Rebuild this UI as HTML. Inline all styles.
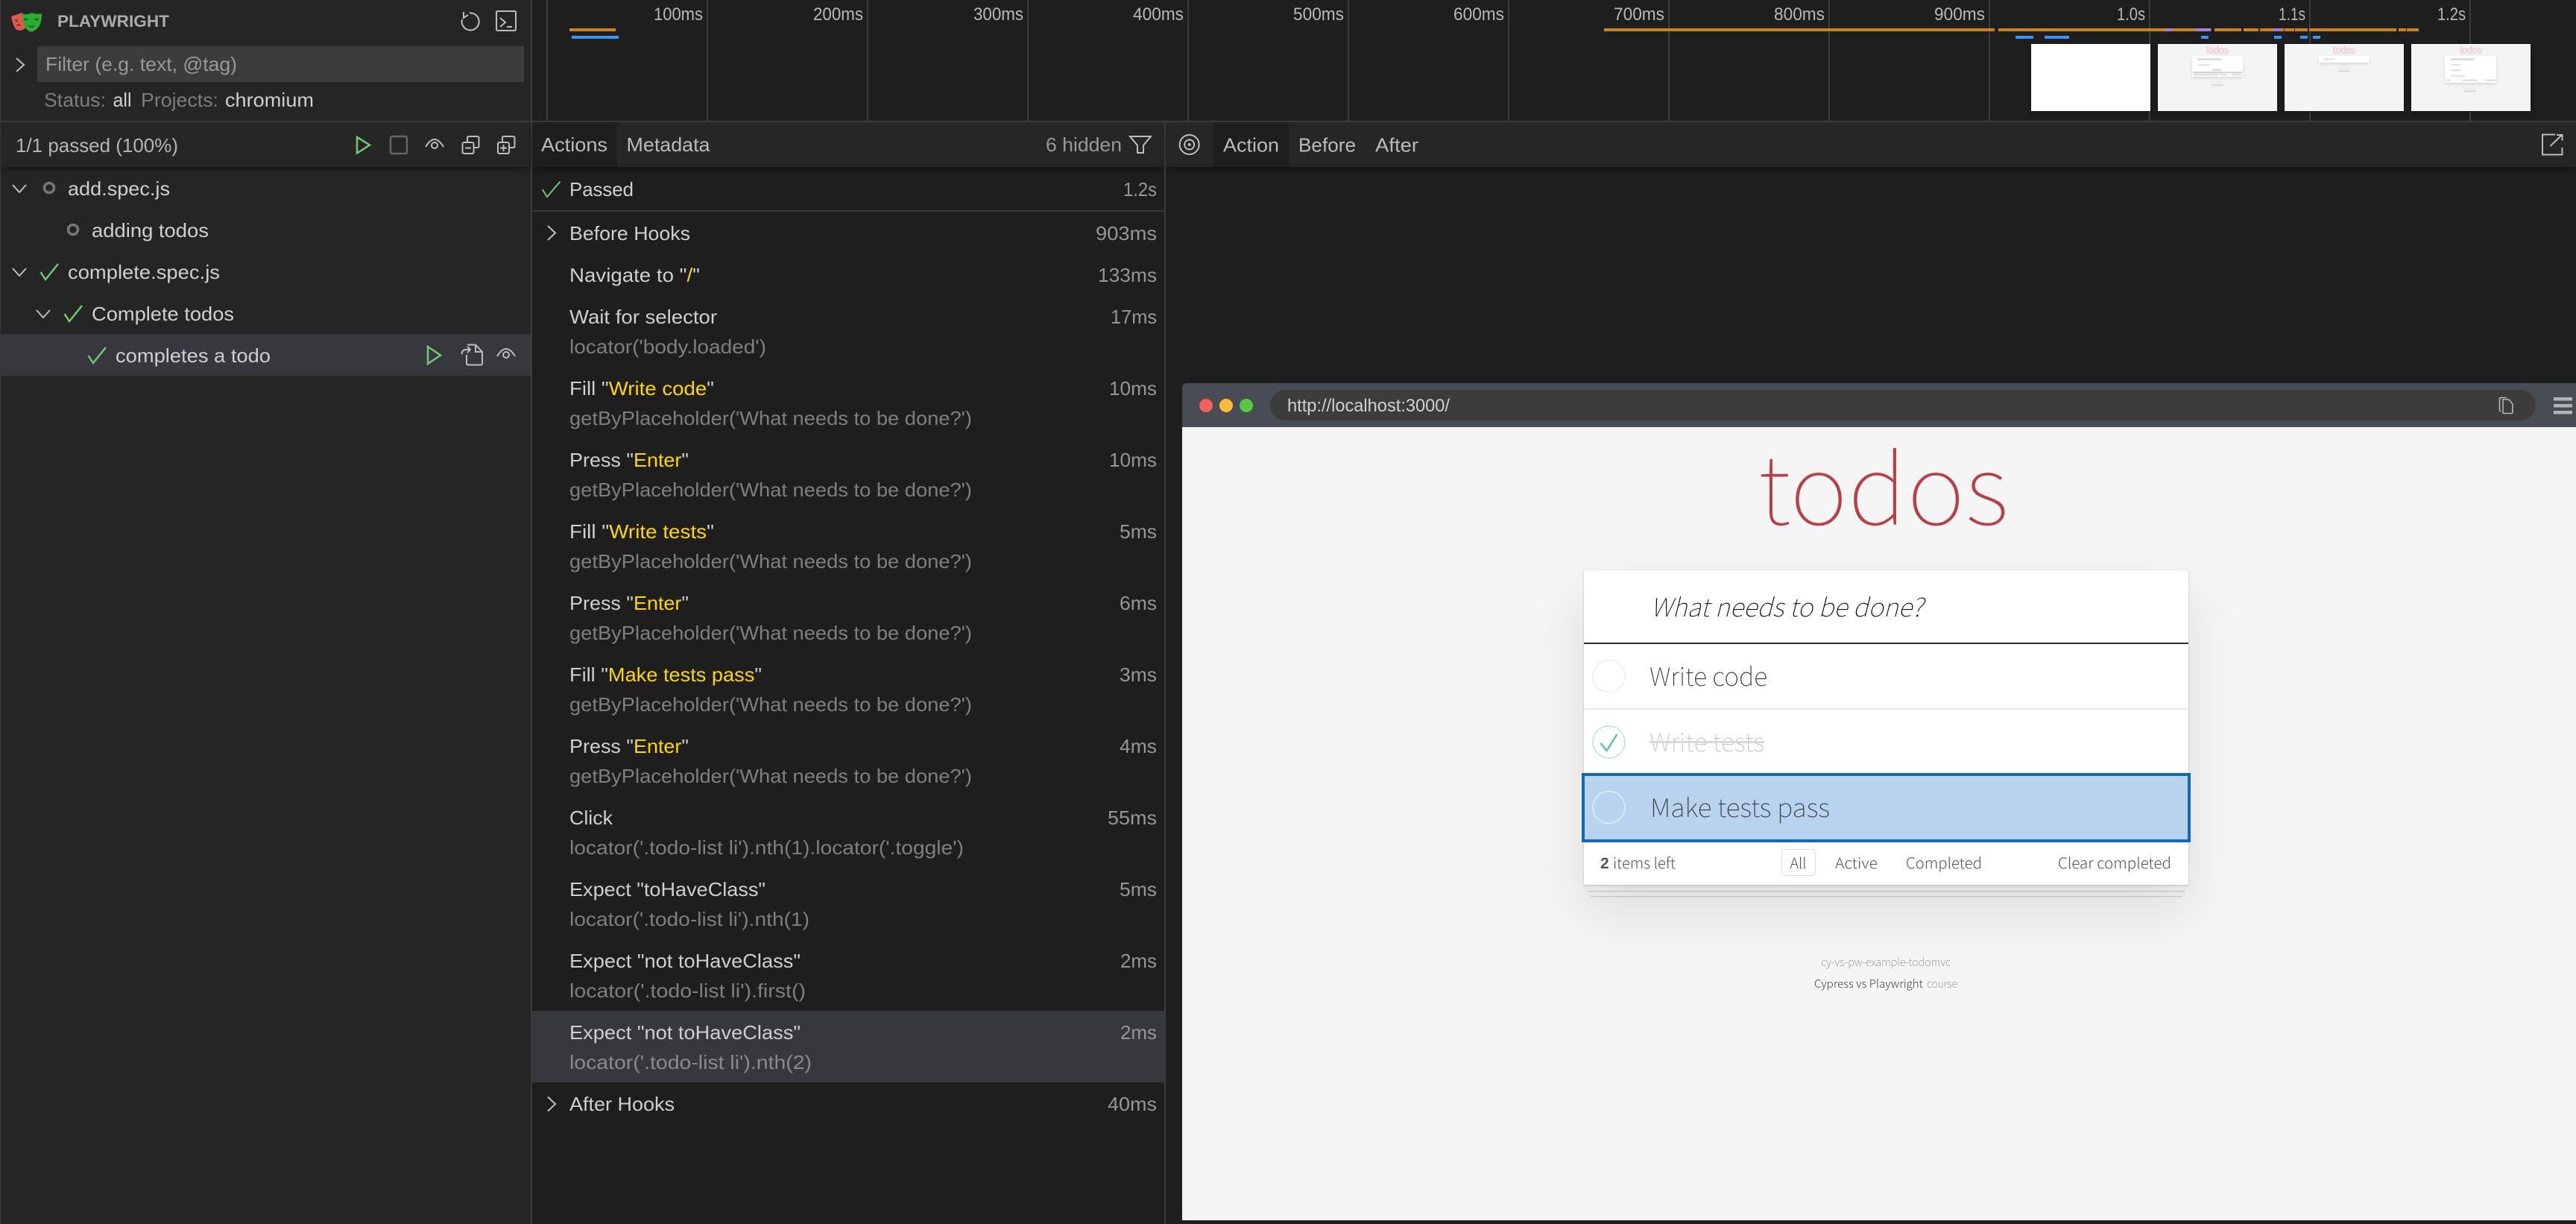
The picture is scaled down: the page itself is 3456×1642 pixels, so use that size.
<!DOCTYPE html>
<html><head><meta charset="utf-8"><title>Playwright</title>
<style>
html,body{margin:0;padding:0;background:#1e1e1e}
body{width:3456px;height:1642px;position:relative;overflow:hidden;font-family:"Liberation Sans",sans-serif}
.b{position:absolute}
svg{position:absolute;left:0;top:0}
text{font-family:"Liberation Sans",sans-serif;font-size:26px;white-space:pre}
.t{fill:#cfcfcf}.s{fill:#7f7f7f}.d{fill:#969696}.y{fill:#ffd700}
.l{fill:#b8b8b8;font-size:24px}
.i{fill:none;stroke:#bdbdbd;stroke-width:2}
.g{fill:none;stroke:#73c971;stroke-width:2.5}
.lt{font-family:"Noto Sans CJK JP","Liberation Sans",sans-serif;font-weight:300;font-size:20px;fill:#555}
.th{font-family:"Noto Sans CJK JP","Liberation Sans",sans-serif;font-weight:100}
.td{font-size:34px;fill:#3a3a3a}
</style></head><body>

<!-- panels -->
<div class="b" style="left:0;top:0;width:712px;height:1642px;background:#252526"></div>
<div class="b" style="left:0;top:0;width:1px;height:1642px;background:#3a3a3a"></div>
<div class="b" style="left:50px;top:62px;width:653px;height:48px;background:#3c3c3c"></div>
<div class="b" style="left:0;top:448px;width:712px;height:56px;background:#37383d"></div>
<div class="b" style="left:712px;top:0;width:2px;height:1642px;background:#3c3c3c"></div>
<div class="b" style="left:1562px;top:164px;width:2px;height:1478px;background:#3c3c3c"></div>
<div class="b" style="left:714px;top:1356px;width:848px;height:96px;background:#37383d"></div>
<div class="b" style="left:714px;top:282px;width:848px;height:2px;background:#3c3c3c"></div>

<!-- toolbars -->
<div class="b" style="left:1px;top:164px;width:711px;height:60px;background:#262626;box-shadow:0 5px 8px -4px rgba(0,0,0,.6)"></div>
<div class="b" style="left:714px;top:164px;width:848px;height:60px;background:#262626;box-shadow:0 5px 8px -4px rgba(0,0,0,.6)"></div>
<div class="b" style="left:714px;top:164px;width:114px;height:60px;background:#1e1e1e"></div>
<div class="b" style="left:1564px;top:164px;width:1892px;height:60px;background:#262626;box-shadow:0 5px 8px -4px rgba(0,0,0,.6)"></div>
<div class="b" style="left:1628px;top:164px;width:101px;height:60px;background:#1e1e1e"></div>

<!-- timeline grid -->
<svg width="3456" height="164" style="z-index:0">
<g fill="#3c3c3c">
<rect x="733" y="0" width="2" height="162"/><rect x="948" y="0" width="2" height="162"/><rect x="1163" y="0" width="2" height="162"/><rect x="1378" y="0" width="2" height="162"/><rect x="1593" y="0" width="2" height="162"/><rect x="1808" y="0" width="2" height="162"/><rect x="2023" y="0" width="2" height="162"/><rect x="2238" y="0" width="2" height="162"/><rect x="2453" y="0" width="2" height="162"/><rect x="2668" y="0" width="2" height="162"/><rect x="2883" y="0" width="2" height="162"/><rect x="3098" y="0" width="2" height="162"/><rect x="3313" y="0" width="2" height="162"/>
<rect x="712" y="162" width="2744" height="2"/><rect x="0" y="162" width="712" height="2"/>
</g>
<g fill="#ce8319">
<rect x="764" y="38" width="62" height="4"/>
<rect x="2152" y="38" width="524" height="4"/><rect x="2681" y="38" width="224" height="4"/><rect x="2914" y="38" width="32" height="4"/><rect x="2965.5" y="38" width="1" height="4"/><rect x="2971" y="38" width="36" height="4"/><rect x="3010" y="38" width="20" height="4"/><rect x="3032" y="38" width="18" height="4"/><rect x="3060" y="38" width="4" height="4"/><rect x="3065" y="38" width="13" height="4"/><rect x="3079" y="38" width="17" height="4"/><rect x="3098" y="38" width="117" height="4"/><rect x="3218" y="38" width="10" height="4"/><rect x="3229" y="38" width="16" height="4"/>
</g>
<g fill="#ac7fd6"><rect x="2905" y="38" width="9" height="4"/><rect x="2946" y="38" width="20" height="4"/><rect x="3050" y="38" width="10" height="4"/></g>
<g fill="#3794ff"><rect x="767" y="48" width="63" height="4"/><rect x="2704" y="48" width="24" height="4"/><rect x="2743" y="48" width="33" height="4"/><rect x="2953" y="48" width="10" height="4"/><rect x="3051" y="48" width="10" height="4"/><rect x="3086" y="48" width="10" height="4"/><rect x="3103" y="48" width="10" height="4"/></g>
</svg>

<!-- thumbnails -->
<div class="b" style="left:2725px;top:59px;width:160px;height:90px;background:#fff;box-shadow:0 2px 5px rgba(0,0,0,.35)"></div>
<div class="b" style="left:2895px;top:59px;width:160px;height:90px;background:#f4f4f4;box-shadow:0 2px 5px rgba(0,0,0,.35)"></div>
<div class="b" style="left:3065px;top:59px;width:160px;height:90px;background:#f4f4f4;box-shadow:0 2px 5px rgba(0,0,0,.35)"></div>
<div class="b" style="left:3235px;top:59px;width:160px;height:90px;background:#f4f4f4;box-shadow:0 2px 5px rgba(0,0,0,.35)"></div>
<div class="b" style="left:2941px;top:75px;width:68px;height:28px;background:#fff;box-shadow:0 2px 4px rgba(0,0,0,.12)"></div>
<div class="b" style="left:3111px;top:75px;width:68px;height:9px;background:#fff;box-shadow:0 2px 4px rgba(0,0,0,.12)"></div>
<div class="b" style="left:3280px;top:75px;width:69px;height:36px;background:#fff;box-shadow:0 2px 4px rgba(0,0,0,.12)"></div>

<!-- browser chrome -->
<div class="b" style="left:1586px;top:514px;width:1870px;height:59px;background:#474c55;border-radius:6px 0 0 0"></div>
<div class="b" style="left:1704px;top:523px;width:1698px;height:41px;background:#3c3c3c;border-radius:20px"></div>
<div class="b" style="left:1609px;top:535px;width:18px;height:18px;border-radius:50%;background:#f66058"></div>
<div class="b" style="left:1636px;top:535px;width:18px;height:18px;border-radius:50%;background:#fdbb3a"></div>
<div class="b" style="left:1663px;top:535px;width:18px;height:18px;border-radius:50%;background:#56c93f"></div>
<div class="b" style="left:1586px;top:573px;width:1870px;height:1064px;background:#f5f5f5"></div>

<!-- todo card -->
<div class="b" style="left:2134px;top:1180px;width:793px;height:22px;background:#f6f6f6;box-shadow:0 1px 1px rgba(0,0,0,.2)"></div>
<div class="b" style="left:2129px;top:1180px;width:802px;height:15px;background:#f6f6f6;box-shadow:0 1px 1px rgba(0,0,0,.2)"></div>
<div class="b" style="left:2125px;top:765px;width:811px;height:422px;background:#fff;box-shadow:0 1px 3px rgba(0,0,0,.2),0 34px 68px rgba(0,0,0,.1)"></div>
<div class="b" style="left:2125px;top:862px;width:811px;height:2px;background:#2b2b2b"></div>
<div class="b" style="left:2125px;top:950px;width:811px;height:2px;background:#ededed"></div>
<div class="b" style="left:2122px;top:1037px;width:809px;height:85px;background:#b8d3ee;border:4px solid #0f6ab4"></div>
<div class="b" style="left:2390px;top:1139px;width:44px;height:34px;border:1.5px solid #efd5d5;border-radius:5px"></div>
<div class="b" style="left:2213px;top:994px;width:154px;height:3px;background:#d9d9d9;z-index:3"></div>

<svg width="3456" height="1642" viewBox="0 0 3456 1642">
<!-- timeline labels -->
<text class="l" x="877" y="27" textLength="66" lengthAdjust="spacingAndGlyphs">100ms</text>
<text class="l" x="1091" y="27" textLength="67" lengthAdjust="spacingAndGlyphs">200ms</text>
<text class="l" x="1306" y="27" textLength="67" lengthAdjust="spacingAndGlyphs">300ms</text>
<text class="l" x="1520" y="27" textLength="68" lengthAdjust="spacingAndGlyphs">400ms</text>
<text class="l" x="1735" y="27" textLength="68" lengthAdjust="spacingAndGlyphs">500ms</text>
<text class="l" x="1950" y="27" textLength="68" lengthAdjust="spacingAndGlyphs">600ms</text>
<text class="l" x="2165" y="27" textLength="68" lengthAdjust="spacingAndGlyphs">700ms</text>
<text class="l" x="2380" y="27" textLength="68" lengthAdjust="spacingAndGlyphs">800ms</text>
<text class="l" x="2595" y="27" textLength="68" lengthAdjust="spacingAndGlyphs">900ms</text>
<text class="l" x="2840" y="27" textLength="38" lengthAdjust="spacingAndGlyphs">1.0s</text>
<text class="l" x="3057" y="27" textLength="36" lengthAdjust="spacingAndGlyphs">1.1s</text>
<text class="l" x="3270" y="27" textLength="38" lengthAdjust="spacingAndGlyphs">1.2s</text>

<!-- thumbnail detail -->
<g style="filter:blur(.4px)">
<text x="2960" y="72" textLength="30" lengthAdjust="spacingAndGlyphs" style="font-size:15px;fill:#e9b9bb">todos</text>
<text x="3130" y="72" textLength="30" lengthAdjust="spacingAndGlyphs" style="font-size:15px;fill:#e9b9bb">todos</text>
<text x="3300" y="72" textLength="30" lengthAdjust="spacingAndGlyphs" style="font-size:15px;fill:#e9b9bb">todos</text>
<g fill="#ccc">
<rect x="2948" y="78.500" width="32" height="2"/><rect x="2949" y="86" width="16" height="2" fill="#ddd"/><rect x="2968" y="93" width="12" height="2"/><rect x="2942" y="96.500" width="66" height="1.500" fill="#bbb"/><rect x="2943" y="99.500" width="33" height="1.500"/><rect x="2978" y="99.500" width="10" height="1.500"/><rect x="2994" y="99.500" width="14" height="1.500"/><rect x="2967" y="110" width="16" height="1.500" fill="#e6e6e6"/><rect x="2967" y="113.500" width="16" height="1.500"/>
<rect x="3118" y="78.500" width="14" height="2" fill="#ddd"/><rect x="3137" y="91" width="16" height="1.500" fill="#e6e6e6"/><rect x="3137" y="94.500" width="16" height="1.500"/>
<rect x="3288" y="78.500" width="32" height="2"/><rect x="3288" y="86" width="14" height="2" fill="#ddd"/><rect x="3288" y="93.500" width="13" height="1.500"/><rect x="3288" y="101" width="20" height="2" fill="#ddd"/><rect x="3282" y="107" width="6" height="1.500"/><rect x="3304" y="107" width="20" height="1.500"/><rect x="3335" y="107" width="13" height="1.500"/><rect x="3306" y="118" width="16" height="1.500" fill="#e6e6e6"/><rect x="3306" y="121.500" width="16" height="1.500"/>
</g>
</g>

<!-- logo -->
<path d="M15 22 L30 17 L34 38 Q27 43 21 39 Q17 33 15 22Z" fill="#e2574c"/>
<path d="M29 18 Q36 21 42 17 Q49 20 56 18 Q56 33 50 38 Q44 44 39 42 Q32 37 31 30Z" fill="#2ead33"/>
<path d="M32 24 l7 2 -6 2z M45 26 l7 -2 -2 4z M37 33 q6 4 11 0 q-3 5 -7 4z" fill="#1d5e2a"/>
<path d="M19 27 l5 -1 -1 4z M21 34 q3 -3 6 -1 l1 2 q-4 -1 -7 -1z" fill="#7a2b24"/>

<text x="77" y="36" textLength="150" lengthAdjust="spacingAndGlyphs" style="font-size:22px;font-weight:bold;fill:#ababab">PLAYWRIGHT</text>
<path class="i" d="M630 17.500 A11.500 11.500 0 1 1 620 26"/><path class="i" d="M622 16 L622 24 L628 20"/>
<rect class="i" x="666" y="15" width="26" height="26" rx="1.500"/>
<path class="i" d="M671 24 L678 30 L671 36 M680 36 H687"/>
<path class="i" d="M22 78 L32 87 L22 96"/>
<text x="61" y="95" textLength="257" lengthAdjust="spacingAndGlyphs" fill="#999">Filter (e.g. text, @tag)</text>
<text x="59" y="143" textLength="83" lengthAdjust="spacingAndGlyphs" fill="#7d7d7d">Status:</text>
<text class="t" x="151.500" y="143" textLength="25" lengthAdjust="spacingAndGlyphs">all</text>
<text x="189" y="143" textLength="104" lengthAdjust="spacingAndGlyphs" fill="#7d7d7d">Projects:</text>
<text class="t" x="302" y="143" textLength="119" lengthAdjust="spacingAndGlyphs">chromium</text>

<text x="21" y="204" textLength="218" lengthAdjust="spacingAndGlyphs" fill="#b5b5b5">1/1 passed (100%)</text>
<path class="g" d="M479 184 L496 194.500 L479 205.500Z"/>
<rect x="524" y="183" width="22" height="23" rx="2" fill="none" stroke="#666" stroke-width="2.500"/>
<path class="i" d="M571 197 Q583 177 595 197"/><circle class="i" cx="583" cy="195" r="4"/>
<rect class="i" x="620.500" y="191" width="15" height="15" rx="2"/><path class="i" d="M627 190 V185 Q627 183 629 183 H640 Q642.500 183 642.500 185 V196 Q642.500 198 640 198 H636 M624 198.500 H632"/>
<rect class="i" x="668" y="191" width="15" height="15" rx="2"/><path class="i" d="M674 190 V185 Q674 183 676 183 H688 Q690.500 183 690.500 185 V196 Q690.500 198 688 198 H684 M671 198.500 H680 M675.500 194 V203"/>

<!-- tree -->
<path class="i" d="M17 248 L26 258 L35 248"/>
<circle cx="66" cy="252" r="6.500" fill="none" stroke="#777" stroke-width="3.500"/>
<text class="t" x="91" y="262" textLength="137" lengthAdjust="spacingAndGlyphs">add.spec.js</text>
<circle cx="98" cy="308" r="6.500" fill="none" stroke="#777" stroke-width="3.500"/>
<text class="t" x="123" y="318" textLength="157" lengthAdjust="spacingAndGlyphs">adding todos</text>
<path class="i" d="M17 360 L26 370 L35 360"/>
<path class="g" d="M54.500 365 L61 375 L78 354"/>
<text class="t" x="91" y="374" textLength="204" lengthAdjust="spacingAndGlyphs">complete.spec.js</text>
<path class="i" d="M49 416 L58 426 L67 416"/>
<path class="g" d="M86.500 421 L93 431 L110 410"/>
<text class="t" x="123" y="430" textLength="191" lengthAdjust="spacingAndGlyphs">Complete todos</text>
<path class="g" d="M118.500 477 L125 487 L142 466"/>
<text class="t" x="155" y="486" textLength="208" lengthAdjust="spacingAndGlyphs">completes a todo</text>
<path class="g" d="M574 465 L591 476.500 L574 488Z"/>
<path class="i" d="M627 462.500 H638 L647 472 V487 Q647 489.500 645 489.500 H628.500 Q626 489.500 626 487 V476 M638 462.500 V472 H647 M631 469 H624 Q619.500 470 619.500 475 M627 465 L631 469 L627 473"/>
<path class="i" d="M667 478 Q679 458 691 478"/><circle class="i" cx="679" cy="476" r="4"/>

<!-- middle tabs -->
<text x="726" y="203" textLength="89" lengthAdjust="spacingAndGlyphs" fill="#bbb">Actions</text>
<text x="840.500" y="203" textLength="112" lengthAdjust="spacingAndGlyphs" fill="#bbb">Metadata</text>
<text x="1403" y="203" textLength="102" lengthAdjust="spacingAndGlyphs" fill="#999">6 hidden</text>
<path class="i" d="M1516 183 H1544 L1534 195 V205 H1526 V195Z"/>

<!-- actions -->
<path class="g" d="M727.500 254 L734 264 L751.500 243.500" style="stroke-width:2"/>
<text class="t" x="764" y="263" textLength="86" lengthAdjust="spacingAndGlyphs">Passed</text>
<text class="d" x="1507" y="263" textLength="45" lengthAdjust="spacingAndGlyphs">1.2s</text>
<path class="i" d="M735 303 L745 312.500 L735 322"/>
<text class="t" x="764" y="322" textLength="162" lengthAdjust="spacingAndGlyphs">Before Hooks</text>
<text class="d" x="1470" y="322" textLength="82" lengthAdjust="spacingAndGlyphs">903ms</text>
<text class="t" x="764" y="378" textLength="175" lengthAdjust="spacingAndGlyphs">Navigate to "<tspan class="y">/</tspan>"</text>
<text class="d" x="1473" y="378" textLength="79" lengthAdjust="spacingAndGlyphs">133ms</text>

<text class="t" x="764" y="434" textLength="198" lengthAdjust="spacingAndGlyphs">Wait for selector</text>
<text class="d" x="1490" y="434" textLength="62" lengthAdjust="spacingAndGlyphs">17ms</text>
<text class="s" x="764" y="474" textLength="264" lengthAdjust="spacingAndGlyphs">locator('body.loaded')</text>

<text class="t" x="764" y="530" textLength="194" lengthAdjust="spacingAndGlyphs">Fill "<tspan class="y">Write code</tspan>"</text>
<text class="d" x="1488" y="530" textLength="64" lengthAdjust="spacingAndGlyphs">10ms</text>
<text class="s" x="764" y="570" textLength="540" lengthAdjust="spacingAndGlyphs">getByPlaceholder('What needs to be done?')</text>

<text class="t" x="764" y="626" textLength="160" lengthAdjust="spacingAndGlyphs">Press "<tspan class="y">Enter</tspan>"</text>
<text class="d" x="1488" y="626" textLength="64" lengthAdjust="spacingAndGlyphs">10ms</text>
<text class="s" x="764" y="666" textLength="540" lengthAdjust="spacingAndGlyphs">getByPlaceholder('What needs to be done?')</text>

<text class="t" x="764" y="722" textLength="194" lengthAdjust="spacingAndGlyphs">Fill "<tspan class="y">Write tests</tspan>"</text>
<text class="d" x="1502" y="722" textLength="50" lengthAdjust="spacingAndGlyphs">5ms</text>
<text class="s" x="764" y="762" textLength="540" lengthAdjust="spacingAndGlyphs">getByPlaceholder('What needs to be done?')</text>

<text class="t" x="764" y="818" textLength="160" lengthAdjust="spacingAndGlyphs">Press "<tspan class="y">Enter</tspan>"</text>
<text class="d" x="1502" y="818" textLength="50" lengthAdjust="spacingAndGlyphs">6ms</text>
<text class="s" x="764" y="858" textLength="540" lengthAdjust="spacingAndGlyphs">getByPlaceholder('What needs to be done?')</text>

<text class="t" x="764" y="914" textLength="258" lengthAdjust="spacingAndGlyphs">Fill "<tspan class="y">Make tests pass</tspan>"</text>
<text class="d" x="1502" y="914" textLength="50" lengthAdjust="spacingAndGlyphs">3ms</text>
<text class="s" x="764" y="954" textLength="540" lengthAdjust="spacingAndGlyphs">getByPlaceholder('What needs to be done?')</text>

<text class="t" x="764" y="1010" textLength="160" lengthAdjust="spacingAndGlyphs">Press "<tspan class="y">Enter</tspan>"</text>
<text class="d" x="1502" y="1010" textLength="50" lengthAdjust="spacingAndGlyphs">4ms</text>
<text class="s" x="764" y="1050" textLength="540" lengthAdjust="spacingAndGlyphs">getByPlaceholder('What needs to be done?')</text>

<text class="t" x="764" y="1106" textLength="58" lengthAdjust="spacingAndGlyphs">Click</text>
<text class="d" x="1486" y="1106" textLength="66" lengthAdjust="spacingAndGlyphs">55ms</text>
<text class="s" x="764" y="1146" textLength="529" lengthAdjust="spacingAndGlyphs">locator('.todo-list li').nth(1).locator('.toggle')</text>

<text class="t" x="764" y="1202" textLength="263" lengthAdjust="spacingAndGlyphs">Expect "toHaveClass"</text>
<text class="d" x="1502" y="1202" textLength="50" lengthAdjust="spacingAndGlyphs">5ms</text>
<text class="s" x="764" y="1242" textLength="322" lengthAdjust="spacingAndGlyphs">locator('.todo-list li').nth(1)</text>

<text class="t" x="764" y="1298" textLength="310" lengthAdjust="spacingAndGlyphs">Expect "not toHaveClass"</text>
<text class="d" x="1503" y="1298" textLength="49" lengthAdjust="spacingAndGlyphs">2ms</text>
<text class="s" x="764" y="1338" textLength="317" lengthAdjust="spacingAndGlyphs">locator('.todo-list li').first()</text>

<text class="t" x="764" y="1394" textLength="310" lengthAdjust="spacingAndGlyphs">Expect "not toHaveClass"</text>
<text class="d" x="1503" y="1394" textLength="49" lengthAdjust="spacingAndGlyphs">2ms</text>
<text x="764" y="1434" textLength="325" lengthAdjust="spacingAndGlyphs" fill="#8a8a8a">locator('.todo-list li').nth(2)</text>

<path class="i" d="M735 1471.500 L745 1481 L735 1490.500"/>
<text class="t" x="764" y="1490" textLength="141" lengthAdjust="spacingAndGlyphs">After Hooks</text>
<text class="d" x="1486" y="1490" textLength="66" lengthAdjust="spacingAndGlyphs">40ms</text>

<!-- right tabs -->
<circle class="i" cx="1595.700" cy="194" r="13"/><circle class="i" cx="1595.700" cy="194" r="6.500"/><circle cx="1595.700" cy="194" r="2" fill="#bdbdbd"/>
<text x="1641" y="203.500" textLength="75" lengthAdjust="spacingAndGlyphs" fill="#bbb">Action</text>
<text x="1742" y="203.500" textLength="77" lengthAdjust="spacingAndGlyphs" fill="#bbb">Before</text>
<text x="1845" y="203.500" textLength="58" lengthAdjust="spacingAndGlyphs" fill="#bbb">After</text>
<path class="i" d="M3428 180.500 H3411 V207.500 H3437.500 V198 M3430 181 H3437.500 V188.500 M3437 181 L3421.500 196"/>

<!-- browser chrome text & icons -->
<text x="1727" y="552" textLength="218" lengthAdjust="spacingAndGlyphs" style="font-size:24px;fill:#d0d0d0">http://localhost:3000/</text>
<path d="M3358 536 H3366 L3371 542 V553 Q3371 554.500 3369.500 554.500 H3359.500 Q3358 554.500 3358 553Z M3355 552 Q3353.500 551 3353.500 549.500 V535 Q3353.500 533.500 3355 533.500 H3363" fill="none" stroke="#bbb" stroke-width="1.500"/>
<g fill="#b3b3b3"><rect x="3426" y="533" width="25" height="4.500"/><rect x="3426" y="542" width="25" height="4.500"/><rect x="3426" y="551" width="25" height="4.500"/></g>

<!-- todos title -->
<text class="th" x="2358" y="704" textLength="337" lengthAdjust="spacingAndGlyphs" style="font-size:130px;fill:#b83f45;stroke:#f5f5f5;stroke-width:.6px">todos</text>

<text class="th" x="2214.500" y="827" textLength="365.500" lengthAdjust="spacingAndGlyphs" style="font-size:34px;font-style:italic;fill:#111">What needs to be done?</text>

<circle cx="2158.500" cy="907" r="21.500" fill="none" stroke="#ededed" stroke-width="1.500"/>
<text class="th td" x="2213" y="920" textLength="158" lengthAdjust="spacingAndGlyphs">Write code</text>
<circle cx="2158.500" cy="995.500" r="21.500" fill="none" stroke="#bde3d9" stroke-width="1.500"/>
<path d="M2147.500 997 L2155.500 1007 L2169.500 985" fill="none" stroke="#5dc2af" stroke-width="2.500"/>
<text class="th td" x="2213" y="1008" textLength="154" lengthAdjust="spacingAndGlyphs" style="fill:#c4c4c4">Write tests</text>
<circle cx="2158.500" cy="1083" r="21.500" fill="none" stroke="#e3edf6" stroke-width="1.500"/>
<text class="th td" x="2214" y="1096" textLength="241" lengthAdjust="spacingAndGlyphs">Make tests pass</text>

<text x="2147" y="1165" style="font-size:21px;font-weight:bold;fill:#555">2</text>
<text class="lt" x="2164" y="1165" textLength="84" lengthAdjust="spacingAndGlyphs">items left</text>
<text class="lt" x="2401.500" y="1165" textLength="22" lengthAdjust="spacingAndGlyphs">All</text>
<text class="lt" x="2462" y="1165" textLength="57" lengthAdjust="spacingAndGlyphs">Active</text>
<text class="lt" x="2557" y="1165" textLength="102" lengthAdjust="spacingAndGlyphs">Completed</text>
<text class="lt" x="2761" y="1165" textLength="152" lengthAdjust="spacingAndGlyphs">Clear completed</text>

<text class="th" x="2443" y="1296" textLength="174" lengthAdjust="spacingAndGlyphs" style="font-size:15px;fill:#777">cy-vs-pw-example-todomvc</text>
<text class="lt" x="2434" y="1325" textLength="146" lengthAdjust="spacingAndGlyphs" style="font-size:15px;fill:#444">Cypress vs Playwright</text>
<text class="th" x="2585" y="1325" textLength="41" lengthAdjust="spacingAndGlyphs" style="font-size:15px;fill:#777">course</text>
</svg>
</body></html>
